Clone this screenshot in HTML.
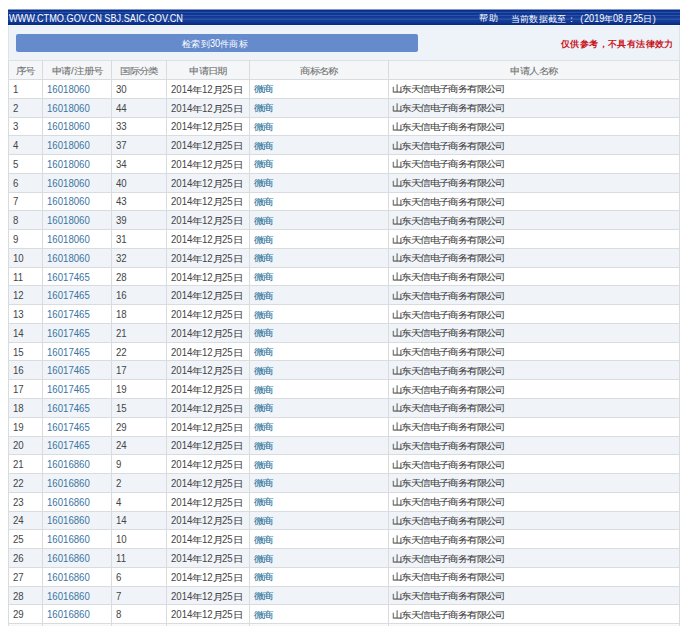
<!DOCTYPE html>
<html><head><meta charset="utf-8">
<style>
html,body{margin:0;padding:0;background:#fff;width:695px;height:638px;overflow:hidden;}
body{font-family:"Liberation Sans",sans-serif;color:#444;position:relative;}
.hdr{position:absolute;left:8px;top:9px;width:672px;height:16px;background:linear-gradient(180deg,#7f98d0 0px,#7f98d0 1px,#0b2b86 1px,#0b2b86 2px,#12378f 2px,#12378f 3px,#2550aa 3px,#2550aa 4px,#0e3391 4px,#0e3391 5px,#12388f 5px,#12388f 6px,#2852ab 6px,#2852ab 7px,#12398f 7px,#12398f 8px,#163e98 8px,#163e98 9px,#2248a4 9px,#2248a4 10px,#2751aa 10px,#2751aa 11px,#143b96 11px,#143b96 12px,#133a95 12px,#133a95 13px,#0f3590 13px,#0f3590 14px,#0c3089 14px,#0c3089 15px,#0a2a7e 15px,#0a2a7e 16px);color:#fff;font-size:9.5px;line-height:16px;}
.hdr .site{position:absolute;left:1px;top:0.8px;font-size:10.6px;display:inline-block;transform:scaleX(0.865);transform-origin:0 50%;}
.hdr .help{position:absolute;left:470.5px;top:1px;font-size:9px;letter-spacing:1.2px;}
.hdr .date{position:absolute;left:502.5px;top:1px;font-size:9px;letter-spacing:0.4px;}
.panel{position:absolute;left:8px;top:25px;width:670px;height:601px;background:#eef3fa;border-left:1px solid #dde3e8;border-right:1px solid #dde3e8;overflow:hidden;}
.panel:before{content:"";position:absolute;left:0;top:0;right:0;height:1px;background:#f4fbfc;}
.panel:after{content:"";position:absolute;left:0;top:1px;right:0;height:1px;background:#e6ecef;}
.btn{position:absolute;left:16px;top:34.1px;width:402px;height:18.2px;background:#668bcd;border-radius:2px;color:#fff;font-size:9px;letter-spacing:0.4px;line-height:18.6px;text-align:center;text-indent:-4px;}
.warn{position:absolute;left:561px;top:38px;color:#c8161c;font-weight:bold;font-size:9px;letter-spacing:0.4px;}
.tw{position:absolute;left:0;top:60px;width:695px;height:566px;overflow:hidden;}
table{position:absolute;left:8px;top:0;border-collapse:collapse;table-layout:fixed;width:671px;font-size:9.8px;}
td,th{border:1px solid #d9dcdf;padding:1px 0 0 4px;height:16.78px;white-space:nowrap;overflow:hidden;text-align:left;line-height:12px;}
th{height:17px;font-weight:normal;color:#727272;text-align:center;background:#f4f6f8;padding:1px 0 0 0;}
.c{font-size:9px;letter-spacing:0.4px;}
td .c,th .c{display:inline-block;font-size:10px;letter-spacing:-0.6px;transform:scaleY(0.86);transform-origin:50% 65%;color:#3e3e3e;-webkit-text-stroke:0.08px currentColor;}
.n{display:inline-block;text-indent:0;font-size:11px;transform:scaleX(0.875);transform-origin:0 0;}
tr{background:#fff;}
tr.e{background:#f0f4f9;}
td.l{color:#3a74a2;}
td.l .c{color:#246f98;}
th .c{color:#707070;}
th{border-top-color:#dde1e5;}
</style></head><body>
<div class="panel"></div>
<div class="hdr"><span class="site">WWW.CTMO.GOV.CN SBJ.SAIC.GOV.CN</span><span class="help">帮助</span><span class="date">当前数据截至：<span style="display:inline-block;width:4px"></span>(<span class="n" style="font-size:10.5px;letter-spacing:0;margin-right:-3px">2019</span>年<span class="n" style="font-size:10.5px;letter-spacing:0;margin-right:-1.5px">08</span>月<span class="n" style="font-size:10.5px;letter-spacing:0;margin-right:-1.5px">25</span>日)</span></div>
<div class="btn">检索到<span class="n" style="font-size:10.5px;letter-spacing:0;margin-right:-1.5px">30</span>件商标</div>
<div class="warn">仅供参考，不具有法律效力</div>
<div class="tw">
<table>
<colgroup><col style="width:34px"><col style="width:69px"><col style="width:55px"><col style="width:83px"><col style="width:139px"><col style="width:291px"></colgroup>
<tr><th><span class="c">序号</span></th><th><span class="c">申请<span style="letter-spacing:0.3px;margin-left:0.6px">/</span>注册号</span></th><th><span class="c">国际分类</span></th><th><span class="c">申请日期</span></th><th><span class="c">商标名称</span></th><th><span class="c">申请人名称</span></th></tr>
<tr><td><span class="n" style="margin-right:-0.76px">1</span></td><td class="l"><span class="n" style="margin-right:-6.12px">16018060</span></td><td><span class="n" style="margin-right:-1.53px">30</span></td><td><span class="n" style="margin-right:-3.06px">2014</span><span class="c">年</span><span class="n" style="margin-right:-1.53px">12</span><span class="c">月</span><span class="n" style="margin-right:-1.53px">25</span><span class="c">日</span></td><td class="l"><span class="c">微商</span></td><td><span class="c" style="margin-left:-1px">山东天信电子商务有限公司</span></td></tr>
<tr class="e"><td><span class="n" style="margin-right:-0.76px">2</span></td><td class="l"><span class="n" style="margin-right:-6.12px">16018060</span></td><td><span class="n" style="margin-right:-1.53px">44</span></td><td><span class="n" style="margin-right:-3.06px">2014</span><span class="c">年</span><span class="n" style="margin-right:-1.53px">12</span><span class="c">月</span><span class="n" style="margin-right:-1.53px">25</span><span class="c">日</span></td><td class="l"><span class="c">微商</span></td><td><span class="c" style="margin-left:-1px">山东天信电子商务有限公司</span></td></tr>
<tr><td><span class="n" style="margin-right:-0.76px">3</span></td><td class="l"><span class="n" style="margin-right:-6.12px">16018060</span></td><td><span class="n" style="margin-right:-1.53px">33</span></td><td><span class="n" style="margin-right:-3.06px">2014</span><span class="c">年</span><span class="n" style="margin-right:-1.53px">12</span><span class="c">月</span><span class="n" style="margin-right:-1.53px">25</span><span class="c">日</span></td><td class="l"><span class="c">微商</span></td><td><span class="c" style="margin-left:-1px">山东天信电子商务有限公司</span></td></tr>
<tr class="e"><td><span class="n" style="margin-right:-0.76px">4</span></td><td class="l"><span class="n" style="margin-right:-6.12px">16018060</span></td><td><span class="n" style="margin-right:-1.53px">37</span></td><td><span class="n" style="margin-right:-3.06px">2014</span><span class="c">年</span><span class="n" style="margin-right:-1.53px">12</span><span class="c">月</span><span class="n" style="margin-right:-1.53px">25</span><span class="c">日</span></td><td class="l"><span class="c">微商</span></td><td><span class="c" style="margin-left:-1px">山东天信电子商务有限公司</span></td></tr>
<tr><td><span class="n" style="margin-right:-0.76px">5</span></td><td class="l"><span class="n" style="margin-right:-6.12px">16018060</span></td><td><span class="n" style="margin-right:-1.53px">34</span></td><td><span class="n" style="margin-right:-3.06px">2014</span><span class="c">年</span><span class="n" style="margin-right:-1.53px">12</span><span class="c">月</span><span class="n" style="margin-right:-1.53px">25</span><span class="c">日</span></td><td class="l"><span class="c">微商</span></td><td><span class="c" style="margin-left:-1px">山东天信电子商务有限公司</span></td></tr>
<tr class="e"><td><span class="n" style="margin-right:-0.76px">6</span></td><td class="l"><span class="n" style="margin-right:-6.12px">16018060</span></td><td><span class="n" style="margin-right:-1.53px">40</span></td><td><span class="n" style="margin-right:-3.06px">2014</span><span class="c">年</span><span class="n" style="margin-right:-1.53px">12</span><span class="c">月</span><span class="n" style="margin-right:-1.53px">25</span><span class="c">日</span></td><td class="l"><span class="c">微商</span></td><td><span class="c" style="margin-left:-1px">山东天信电子商务有限公司</span></td></tr>
<tr><td><span class="n" style="margin-right:-0.76px">7</span></td><td class="l"><span class="n" style="margin-right:-6.12px">16018060</span></td><td><span class="n" style="margin-right:-1.53px">43</span></td><td><span class="n" style="margin-right:-3.06px">2014</span><span class="c">年</span><span class="n" style="margin-right:-1.53px">12</span><span class="c">月</span><span class="n" style="margin-right:-1.53px">25</span><span class="c">日</span></td><td class="l"><span class="c">微商</span></td><td><span class="c" style="margin-left:-1px">山东天信电子商务有限公司</span></td></tr>
<tr class="e"><td><span class="n" style="margin-right:-0.76px">8</span></td><td class="l"><span class="n" style="margin-right:-6.12px">16018060</span></td><td><span class="n" style="margin-right:-1.53px">39</span></td><td><span class="n" style="margin-right:-3.06px">2014</span><span class="c">年</span><span class="n" style="margin-right:-1.53px">12</span><span class="c">月</span><span class="n" style="margin-right:-1.53px">25</span><span class="c">日</span></td><td class="l"><span class="c">微商</span></td><td><span class="c" style="margin-left:-1px">山东天信电子商务有限公司</span></td></tr>
<tr><td><span class="n" style="margin-right:-0.76px">9</span></td><td class="l"><span class="n" style="margin-right:-6.12px">16018060</span></td><td><span class="n" style="margin-right:-1.53px">31</span></td><td><span class="n" style="margin-right:-3.06px">2014</span><span class="c">年</span><span class="n" style="margin-right:-1.53px">12</span><span class="c">月</span><span class="n" style="margin-right:-1.53px">25</span><span class="c">日</span></td><td class="l"><span class="c">微商</span></td><td><span class="c" style="margin-left:-1px">山东天信电子商务有限公司</span></td></tr>
<tr class="e"><td><span class="n" style="margin-right:-1.53px">10</span></td><td class="l"><span class="n" style="margin-right:-6.12px">16018060</span></td><td><span class="n" style="margin-right:-1.53px">32</span></td><td><span class="n" style="margin-right:-3.06px">2014</span><span class="c">年</span><span class="n" style="margin-right:-1.53px">12</span><span class="c">月</span><span class="n" style="margin-right:-1.53px">25</span><span class="c">日</span></td><td class="l"><span class="c">微商</span></td><td><span class="c" style="margin-left:-1px">山东天信电子商务有限公司</span></td></tr>
<tr><td><span class="n" style="margin-right:-1.53px">11</span></td><td class="l"><span class="n" style="margin-right:-6.12px">16017465</span></td><td><span class="n" style="margin-right:-1.53px">28</span></td><td><span class="n" style="margin-right:-3.06px">2014</span><span class="c">年</span><span class="n" style="margin-right:-1.53px">12</span><span class="c">月</span><span class="n" style="margin-right:-1.53px">25</span><span class="c">日</span></td><td class="l"><span class="c">微商</span></td><td><span class="c" style="margin-left:-1px">山东天信电子商务有限公司</span></td></tr>
<tr class="e"><td><span class="n" style="margin-right:-1.53px">12</span></td><td class="l"><span class="n" style="margin-right:-6.12px">16017465</span></td><td><span class="n" style="margin-right:-1.53px">16</span></td><td><span class="n" style="margin-right:-3.06px">2014</span><span class="c">年</span><span class="n" style="margin-right:-1.53px">12</span><span class="c">月</span><span class="n" style="margin-right:-1.53px">25</span><span class="c">日</span></td><td class="l"><span class="c">微商</span></td><td><span class="c" style="margin-left:-1px">山东天信电子商务有限公司</span></td></tr>
<tr><td><span class="n" style="margin-right:-1.53px">13</span></td><td class="l"><span class="n" style="margin-right:-6.12px">16017465</span></td><td><span class="n" style="margin-right:-1.53px">18</span></td><td><span class="n" style="margin-right:-3.06px">2014</span><span class="c">年</span><span class="n" style="margin-right:-1.53px">12</span><span class="c">月</span><span class="n" style="margin-right:-1.53px">25</span><span class="c">日</span></td><td class="l"><span class="c">微商</span></td><td><span class="c" style="margin-left:-1px">山东天信电子商务有限公司</span></td></tr>
<tr class="e"><td><span class="n" style="margin-right:-1.53px">14</span></td><td class="l"><span class="n" style="margin-right:-6.12px">16017465</span></td><td><span class="n" style="margin-right:-1.53px">21</span></td><td><span class="n" style="margin-right:-3.06px">2014</span><span class="c">年</span><span class="n" style="margin-right:-1.53px">12</span><span class="c">月</span><span class="n" style="margin-right:-1.53px">25</span><span class="c">日</span></td><td class="l"><span class="c">微商</span></td><td><span class="c" style="margin-left:-1px">山东天信电子商务有限公司</span></td></tr>
<tr><td><span class="n" style="margin-right:-1.53px">15</span></td><td class="l"><span class="n" style="margin-right:-6.12px">16017465</span></td><td><span class="n" style="margin-right:-1.53px">22</span></td><td><span class="n" style="margin-right:-3.06px">2014</span><span class="c">年</span><span class="n" style="margin-right:-1.53px">12</span><span class="c">月</span><span class="n" style="margin-right:-1.53px">25</span><span class="c">日</span></td><td class="l"><span class="c">微商</span></td><td><span class="c" style="margin-left:-1px">山东天信电子商务有限公司</span></td></tr>
<tr class="e"><td><span class="n" style="margin-right:-1.53px">16</span></td><td class="l"><span class="n" style="margin-right:-6.12px">16017465</span></td><td><span class="n" style="margin-right:-1.53px">17</span></td><td><span class="n" style="margin-right:-3.06px">2014</span><span class="c">年</span><span class="n" style="margin-right:-1.53px">12</span><span class="c">月</span><span class="n" style="margin-right:-1.53px">25</span><span class="c">日</span></td><td class="l"><span class="c">微商</span></td><td><span class="c" style="margin-left:-1px">山东天信电子商务有限公司</span></td></tr>
<tr><td><span class="n" style="margin-right:-1.53px">17</span></td><td class="l"><span class="n" style="margin-right:-6.12px">16017465</span></td><td><span class="n" style="margin-right:-1.53px">19</span></td><td><span class="n" style="margin-right:-3.06px">2014</span><span class="c">年</span><span class="n" style="margin-right:-1.53px">12</span><span class="c">月</span><span class="n" style="margin-right:-1.53px">25</span><span class="c">日</span></td><td class="l"><span class="c">微商</span></td><td><span class="c" style="margin-left:-1px">山东天信电子商务有限公司</span></td></tr>
<tr class="e"><td><span class="n" style="margin-right:-1.53px">18</span></td><td class="l"><span class="n" style="margin-right:-6.12px">16017465</span></td><td><span class="n" style="margin-right:-1.53px">15</span></td><td><span class="n" style="margin-right:-3.06px">2014</span><span class="c">年</span><span class="n" style="margin-right:-1.53px">12</span><span class="c">月</span><span class="n" style="margin-right:-1.53px">25</span><span class="c">日</span></td><td class="l"><span class="c">微商</span></td><td><span class="c" style="margin-left:-1px">山东天信电子商务有限公司</span></td></tr>
<tr><td><span class="n" style="margin-right:-1.53px">19</span></td><td class="l"><span class="n" style="margin-right:-6.12px">16017465</span></td><td><span class="n" style="margin-right:-1.53px">29</span></td><td><span class="n" style="margin-right:-3.06px">2014</span><span class="c">年</span><span class="n" style="margin-right:-1.53px">12</span><span class="c">月</span><span class="n" style="margin-right:-1.53px">25</span><span class="c">日</span></td><td class="l"><span class="c">微商</span></td><td><span class="c" style="margin-left:-1px">山东天信电子商务有限公司</span></td></tr>
<tr class="e"><td><span class="n" style="margin-right:-1.53px">20</span></td><td class="l"><span class="n" style="margin-right:-6.12px">16017465</span></td><td><span class="n" style="margin-right:-1.53px">24</span></td><td><span class="n" style="margin-right:-3.06px">2014</span><span class="c">年</span><span class="n" style="margin-right:-1.53px">12</span><span class="c">月</span><span class="n" style="margin-right:-1.53px">25</span><span class="c">日</span></td><td class="l"><span class="c">微商</span></td><td><span class="c" style="margin-left:-1px">山东天信电子商务有限公司</span></td></tr>
<tr><td><span class="n" style="margin-right:-1.53px">21</span></td><td class="l"><span class="n" style="margin-right:-6.12px">16016860</span></td><td><span class="n" style="margin-right:-0.76px">9</span></td><td><span class="n" style="margin-right:-3.06px">2014</span><span class="c">年</span><span class="n" style="margin-right:-1.53px">12</span><span class="c">月</span><span class="n" style="margin-right:-1.53px">25</span><span class="c">日</span></td><td class="l"><span class="c">微商</span></td><td><span class="c" style="margin-left:-1px">山东天信电子商务有限公司</span></td></tr>
<tr class="e"><td><span class="n" style="margin-right:-1.53px">22</span></td><td class="l"><span class="n" style="margin-right:-6.12px">16016860</span></td><td><span class="n" style="margin-right:-0.76px">2</span></td><td><span class="n" style="margin-right:-3.06px">2014</span><span class="c">年</span><span class="n" style="margin-right:-1.53px">12</span><span class="c">月</span><span class="n" style="margin-right:-1.53px">25</span><span class="c">日</span></td><td class="l"><span class="c">微商</span></td><td><span class="c" style="margin-left:-1px">山东天信电子商务有限公司</span></td></tr>
<tr><td><span class="n" style="margin-right:-1.53px">23</span></td><td class="l"><span class="n" style="margin-right:-6.12px">16016860</span></td><td><span class="n" style="margin-right:-0.76px">4</span></td><td><span class="n" style="margin-right:-3.06px">2014</span><span class="c">年</span><span class="n" style="margin-right:-1.53px">12</span><span class="c">月</span><span class="n" style="margin-right:-1.53px">25</span><span class="c">日</span></td><td class="l"><span class="c">微商</span></td><td><span class="c" style="margin-left:-1px">山东天信电子商务有限公司</span></td></tr>
<tr class="e"><td><span class="n" style="margin-right:-1.53px">24</span></td><td class="l"><span class="n" style="margin-right:-6.12px">16016860</span></td><td><span class="n" style="margin-right:-1.53px">14</span></td><td><span class="n" style="margin-right:-3.06px">2014</span><span class="c">年</span><span class="n" style="margin-right:-1.53px">12</span><span class="c">月</span><span class="n" style="margin-right:-1.53px">25</span><span class="c">日</span></td><td class="l"><span class="c">微商</span></td><td><span class="c" style="margin-left:-1px">山东天信电子商务有限公司</span></td></tr>
<tr><td><span class="n" style="margin-right:-1.53px">25</span></td><td class="l"><span class="n" style="margin-right:-6.12px">16016860</span></td><td><span class="n" style="margin-right:-1.53px">10</span></td><td><span class="n" style="margin-right:-3.06px">2014</span><span class="c">年</span><span class="n" style="margin-right:-1.53px">12</span><span class="c">月</span><span class="n" style="margin-right:-1.53px">25</span><span class="c">日</span></td><td class="l"><span class="c">微商</span></td><td><span class="c" style="margin-left:-1px">山东天信电子商务有限公司</span></td></tr>
<tr class="e"><td><span class="n" style="margin-right:-1.53px">26</span></td><td class="l"><span class="n" style="margin-right:-6.12px">16016860</span></td><td><span class="n" style="margin-right:-1.53px">11</span></td><td><span class="n" style="margin-right:-3.06px">2014</span><span class="c">年</span><span class="n" style="margin-right:-1.53px">12</span><span class="c">月</span><span class="n" style="margin-right:-1.53px">25</span><span class="c">日</span></td><td class="l"><span class="c">微商</span></td><td><span class="c" style="margin-left:-1px">山东天信电子商务有限公司</span></td></tr>
<tr><td><span class="n" style="margin-right:-1.53px">27</span></td><td class="l"><span class="n" style="margin-right:-6.12px">16016860</span></td><td><span class="n" style="margin-right:-0.76px">6</span></td><td><span class="n" style="margin-right:-3.06px">2014</span><span class="c">年</span><span class="n" style="margin-right:-1.53px">12</span><span class="c">月</span><span class="n" style="margin-right:-1.53px">25</span><span class="c">日</span></td><td class="l"><span class="c">微商</span></td><td><span class="c" style="margin-left:-1px">山东天信电子商务有限公司</span></td></tr>
<tr class="e"><td><span class="n" style="margin-right:-1.53px">28</span></td><td class="l"><span class="n" style="margin-right:-6.12px">16016860</span></td><td><span class="n" style="margin-right:-0.76px">7</span></td><td><span class="n" style="margin-right:-3.06px">2014</span><span class="c">年</span><span class="n" style="margin-right:-1.53px">12</span><span class="c">月</span><span class="n" style="margin-right:-1.53px">25</span><span class="c">日</span></td><td class="l"><span class="c">微商</span></td><td><span class="c" style="margin-left:-1px">山东天信电子商务有限公司</span></td></tr>
<tr><td><span class="n" style="margin-right:-1.53px">29</span></td><td class="l"><span class="n" style="margin-right:-6.12px">16016860</span></td><td><span class="n" style="margin-right:-0.76px">8</span></td><td><span class="n" style="margin-right:-3.06px">2014</span><span class="c">年</span><span class="n" style="margin-right:-1.53px">12</span><span class="c">月</span><span class="n" style="margin-right:-1.53px">25</span><span class="c">日</span></td><td class="l"><span class="c">微商</span></td><td><span class="c" style="margin-left:-1px">山东天信电子商务有限公司</span></td></tr>
<tr style="background:#f7f9fb"><td><span class="n" style="margin-right:-1.53px">30</span></td><td class="l"><span class="n" style="margin-right:-6.12px">16016860</span></td><td><span class="n" style="margin-right:-1.53px">12</span></td><td><span class="n" style="margin-right:-3.06px">2014</span><span class="c">年</span><span class="n" style="margin-right:-1.53px">12</span><span class="c">月</span><span class="n" style="margin-right:-1.53px">25</span><span class="c">日</span></td><td class="l"><span class="c">微商</span></td><td><span class="c" style="margin-left:-1px">山东天信电子商务有限公司</span></td></tr>
</table>
</div>
</body></html>
